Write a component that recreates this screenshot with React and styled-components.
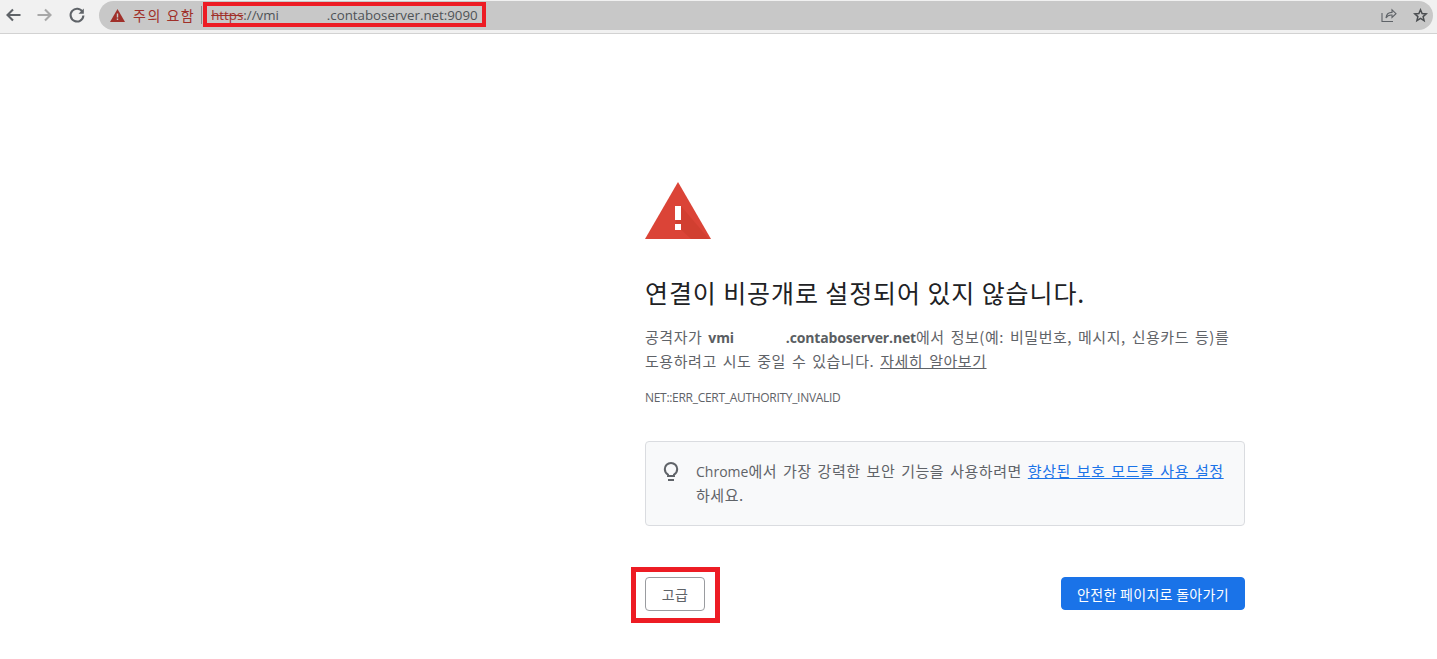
import React from 'react';
import styled, { createGlobalStyle } from 'styled-components';

const GlobalStyle = createGlobalStyle`
    html, body {
        margin: 0;
        padding: 0;
        background: #fff;
    }
    body {
        font-family: "Noto Sans CJK KR", sans-serif;
        overflow: hidden;
    }
`;

const Page = styled.div`
    position: relative;
    width: 1437px;
    height: 659px;
    overflow: hidden;
`;

// Browser chrome
const Toolbar = styled.header`
    display: flex;
    align-items: center;
    box-sizing: border-box;
    height: 34px;
    padding: 0 4px 3px 0;
    background: #f1f1f1;
    border-bottom: 1px solid #d2d2d2;
`;

const NavGroup = styled.div`
    display: flex;
    align-items: center;
    gap: 14px;
    padding-left: 4px;
    width: 99px;
    box-sizing: border-box;
`;

const NavIcon = styled.svg`
    display: block;
    width: 18px;
    height: 18px;
    fill: none;
    stroke: ${({ $dim }) => ($dim ? '#a8a8a8' : '#5f6368')};
    stroke-width: 2.1;
`;

const Omnibox = styled.div`
    flex: 1;
    display: flex;
    align-items: center;
    height: 29px;
    padding: 0 5px 0 11px;
    background: #c8c8c8;
    border-radius: 15px;
`;

const DangerLabel = styled.span`
    margin-left: 8px;
    padding-right: 6px;
    border-right: 1px solid #8a8a8a;
    font-size: 14px;
    line-height: 18px;
    letter-spacing: 1.5px;
    color: #a0302a;
`;

const Url = styled.span`
    margin-left: 9px;
    font-family: "Open Sans", sans-serif;
    font-size: 13.3px;
    color: #4f5357;
    white-space: pre;
    flex: 1;
`;

const Strike = styled.span`
    color: #a0302a;
    text-decoration: line-through;
`;

const UrlGap = styled.span`
    display: inline-block;
    width: 48px;
`;

const OmniActions = styled.div`
    display: flex;
    align-items: center;
    gap: 16px;
`;

// Interstitial body
const Main = styled.main`
    width: 600px;
    margin-left: 645px;
    padding-top: 148px;
    color: #5f6368;
`;

const WarningIcon = styled.svg`
    display: block;
    width: 66px;
    height: 58px;
`;

const Heading = styled.h1`
    margin: 32px 0 0;
    font-size: 25px;
    font-weight: 400;
    line-height: 40px;
    color: #202124;
    letter-spacing: 0.9px;
`;

const Paragraph = styled.p`
    margin: 13px 0 0;
    font-size: 15px;
    line-height: 24px;
    letter-spacing: 0.55px;
    word-spacing: 2px;
    white-space: nowrap;
`;

const Host = styled.b`
    font-family: "Open Sans", sans-serif;
    font-size: 14px;
    line-height: 1;
    font-weight: 700;
    letter-spacing: -0.15px;
    color: #5a5e62;
`;

const HostGap = styled.span`
    display: inline-block;
    width: 52px;
`;

const PlainLink = styled.a`
    color: #5f6368;
    text-decoration: underline;
`;

const ErrorCode = styled.div`
    margin-top: 16px;
    font-family: "Open Sans", sans-serif;
    font-size: 12px;
    line-height: 18px;
    letter-spacing: -0.3px;
    color: #5f6368;
`;

const Notice = styled.div`
    display: flex;
    gap: 16px;
    box-sizing: border-box;
    height: 85px;
    margin-top: 34px;
    padding: 17px 16px 0 16px;
    background: #f8f9fa;
    border: 1px solid #dadce0;
    border-radius: 4px;
    font-size: 15px;
    line-height: 24px;
    letter-spacing: 0.55px;
    word-spacing: 2px;
    white-space: nowrap;
`;

const Latin = styled.span`
    font-family: "Open Sans", sans-serif;
    font-size: 14px;
    line-height: 1;
    letter-spacing: 0;
`;

const BulbIcon = styled.svg`
    flex: none;
    width: 18px;
    height: 21px;
    margin-top: 2px;
    fill: none;
    stroke: #5f6368;
`;

const NoticeLink = styled.a`
    color: #1a73e8;
    text-decoration: underline;
`;

const Actions = styled.div`
    display: flex;
    justify-content: space-between;
    margin-top: 51px;
`;

const Button = styled.button`
    height: ${({ $primary }) => ($primary ? 33 : 34)}px;
    padding: 0;
    width: ${({ $width }) => $width}px;
    border: 1px solid ${({ $primary }) => ($primary ? '#1a73e8' : '#9a9ca0')};
    border-radius: 4px;
    background: ${({ $primary }) => ($primary ? '#1a73e8' : '#fff')};
    color: ${({ $primary }) => ($primary ? '#fff' : '#5f6368')};
    font-family: "Noto Sans CJK KR", sans-serif;
    font-size: 14px;
    letter-spacing: 0.3px;
    line-height: 1;
`;

// Red annotation boxes drawn over the screenshot
const Mark = styled.div`
    position: absolute;
    left: ${({ $x }) => $x}px;
    top: ${({ $y }) => $y}px;
    width: ${({ $w }) => $w}px;
    height: ${({ $h }) => $h}px;
    box-sizing: border-box;
    border: ${({ $b }) => $b}px solid #ed1c24;
    pointer-events: none;
`;

const App = () => (
    <Page>
        <GlobalStyle />
        <Toolbar>
            <NavGroup>
                <NavIcon viewBox="0 0 18 18">
                    <path d="M16.500 9H3.500M9 3.500 3.500 9 9 14.500" />
                </NavIcon>
                <NavIcon viewBox="0 0 18 18" $dim>
                    <path d="M1.500 9h13M9 3.500 14.500 9 9 14.500" />
                </NavIcon>
                <NavIcon viewBox="0 0 18 18">
                    <path d="M14.600 6A6.400 6.400 0 1 0 15.400 9.500" />
                    <path d="M15.800 2.500v5.300h-5.300" fill="#5f6368" stroke="none" />
                </NavIcon>
            </NavGroup>
            <Omnibox>
                <svg width="15" height="13" viewBox="0 0 15 13">
                    <path d="M7.500 0 15 13H0Z" fill="#a0302a" />
                    <path d="M6.800 4.500h1.400v4H6.800zM6.800 9.600h1.400V11H6.800z" fill="#c8c8c8" />
                </svg>
                <DangerLabel>주의 요함</DangerLabel>
                <Url>
                    <Strike>https</Strike>://vmi<UrlGap />.contaboserver.net:9090
                </Url>
                <OmniActions>
                    <svg width="16" height="16" viewBox="0 0 16 16" fill="none" stroke="#5f6368" strokeWidth="1.1">
                        <path d="M1 6v8.500h11" />
                        <path d="M5 11c.3-3.500 2.600-5.600 6-5.600V2.800l4 3.900-4 3.800V8c-2.500-.2-4.700.6-6 3Z" />
                    </svg>
                    <svg width="15" height="15" viewBox="0 0 15 15" fill="none" stroke="#4a4d50" strokeWidth="1.5">
                        <path d="M7.500 1.800 9.100 5.600l4.100.3-3.100 2.700 1 4-3.600-2.200-3.600 2.200 1-4-3.100-2.700 4.100-.3Z" />
                    </svg>
                </OmniActions>
            </Omnibox>
        </Toolbar>

        <Main>
            <WarningIcon viewBox="0 0 66 58">
                <path d="M33 0 66 57H0Z" fill="#db4437" />
                <path d="M36 24 64 57H46L30 42Z" fill="#c53929" opacity="0.45" />
                <path d="M30 24h6v14h-6zM30 42h6v6h-6z" fill="#fff" />
            </WarningIcon>
            <Heading>연결이 비공개로 설정되어 있지 않습니다.</Heading>
            <Paragraph>
                공격자가 <Host>vmi<HostGap />.contaboserver.net</Host>에서 정보(예: 비밀번호, 메시지, 신용카드 등)를
                <br />
                도용하려고 시도 중일 수 있습니다. <PlainLink href="#">자세히 알아보기</PlainLink>
            </Paragraph>
            <ErrorCode>NET::ERR_CERT_AUTHORITY_INVALID</ErrorCode>
            <Notice>
                <BulbIcon viewBox="0 0 18 21" strokeWidth="2">
                    <path d="M6 15v-1.300C4 12.500 2.800 10.500 2.800 8.100a6.200 6.200 0 0 1 12.400 0c0 2.400-1.200 4.400-3.200 5.600V15Z" />
                    <path d="M6 19h6" />
                </BulbIcon>
                <div>
                    <Latin>Chrome</Latin>에서 가장 강력한 보안 기능을 사용하려면 <NoticeLink href="#">향상된 보호 모드를 사용 설정</NoticeLink>
                    <br />
                    하세요.
                </div>
            </Notice>
            <Actions>
                <Button $width={60}>고급</Button>
                <Button $primary $width={184}>안전한 페이지로 돌아가기</Button>
            </Actions>
        </Main>

        <Mark $x={203} $y={2} $w={283} $h={25} $b={4} />
        <Mark $x={631} $y={567} $w={89} $h={56} $b={5} />
    </Page>
);

export default App;
